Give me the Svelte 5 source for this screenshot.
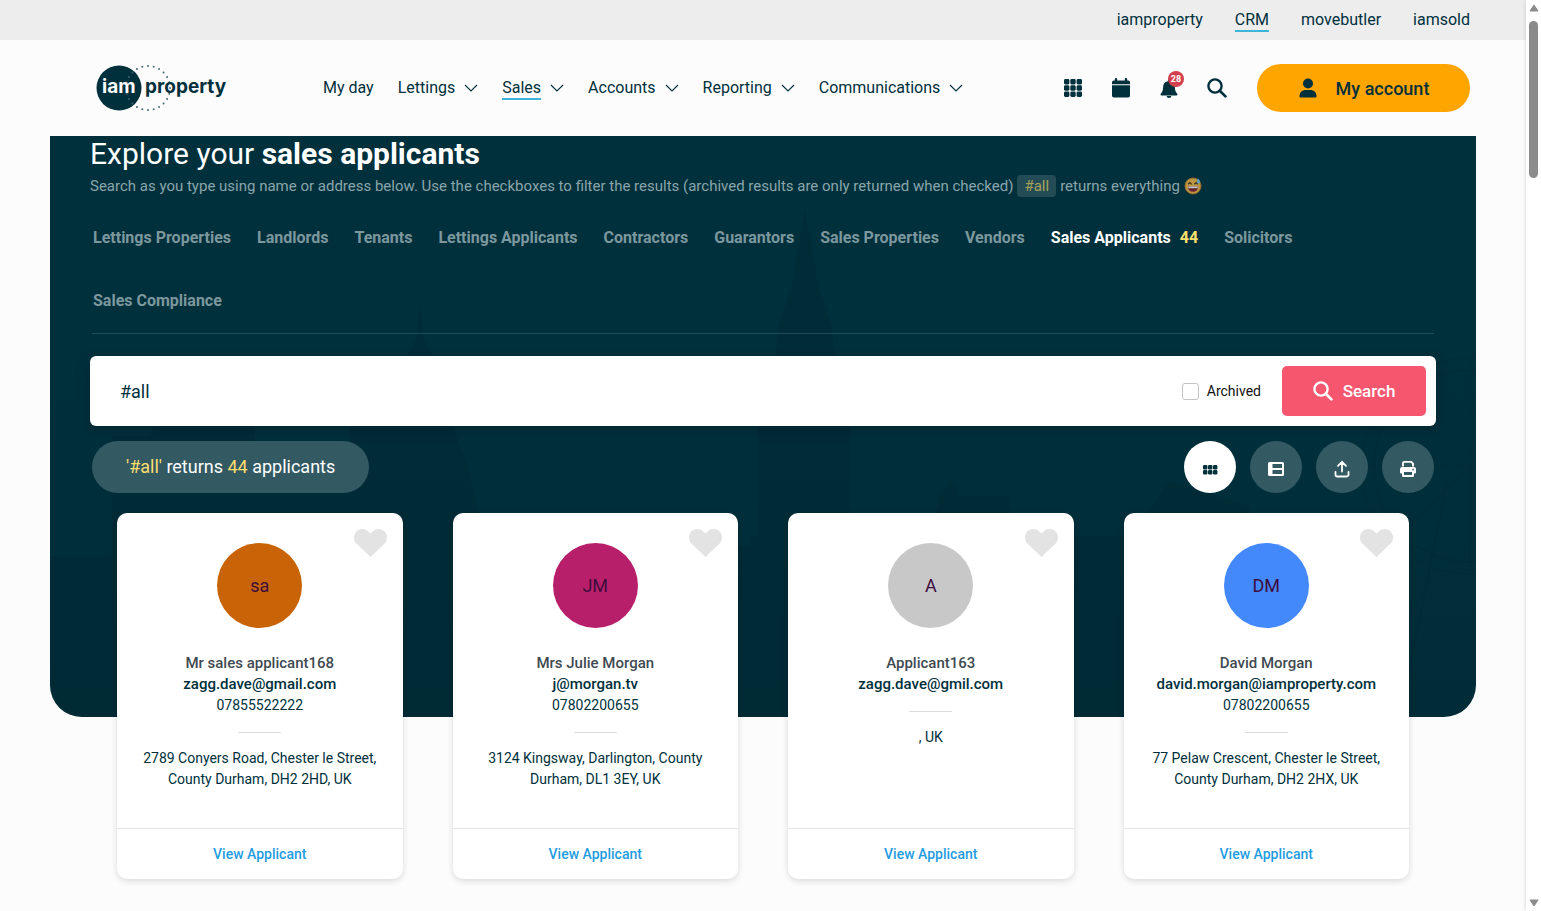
<script lang="ts">
  type Applicant = {
    initials: string;
    colour: string;
    name: string;
    email: string;
    phone?: string;
    address: string;
  };

  const sites = ['iamproperty', 'CRM', 'movebutler', 'iamsold'];

  const menu = [
    { label: 'My day', children: false },
    { label: 'Lettings', children: true },
    { label: 'Sales', children: true },
    { label: 'Accounts', children: true },
    { label: 'Reporting', children: true },
    { label: 'Communications', children: true },
  ];

  const tabs = [
    'Lettings Properties',
    'Landlords',
    'Tenants',
    'Lettings Applicants',
    'Contractors',
    'Guarantors',
    'Sales Properties',
    'Vendors',
    'Sales Applicants',
    'Solicitors',
    'Sales Compliance',
  ];

  const applicants: Applicant[] = [
    {
      initials: 'sa',
      colour: '#c86407',
      name: 'Mr sales applicant168',
      email: 'zagg.dave@gmail.com',
      phone: '07855522222',
      address: '2789 Conyers Road, Chester le Street, County Durham, DH2 2HD, UK',
    },
    {
      initials: 'JM',
      colour: '#b81f6b',
      name: 'Mrs Julie Morgan',
      email: 'j@morgan.tv',
      phone: '07802200655',
      address: '3124 Kingsway, Darlington, County Durham, DL1 3EY, UK',
    },
    {
      initials: 'A',
      colour: '#c8c8c8',
      name: 'Applicant163',
      email: 'zagg.dave@gmil.com',
      address: ', UK',
    },
    {
      initials: 'DM',
      colour: '#4489fb',
      name: 'David Morgan',
      email: 'david.morgan@iamproperty.com',
      phone: '07802200655',
      address: '77 Pelaw Crescent, Chester le Street, County Durham, DH2 2HX, UK',
    },
  ];

  let activeTab = $state('Sales Applicants');
  let query = $state('#all');
  let archived = $state(false);
  let total = $state(44);

  // The dotted ring behind the wordmark.
  const ring = Array.from({ length: 24 }, (_, i) => {
    const a = (i / 24) * Math.PI * 2;
    return { x: 52 + Math.sin(a) * 22, y: 24 - Math.cos(a) * 22 };
  });
</script>

{#snippet magnifier()}
  <svg viewBox="0 0 20 20" width="20" height="20" aria-hidden="true">
    <circle cx="8" cy="8" r="6.6" fill="none" stroke="currentColor" stroke-width="2.4" />
    <path d="M12.8 12.8 18.4 18.4" stroke="currentColor" stroke-width="2.7" stroke-linecap="round" />
  </svg>
{/snippet}

<div class="shell">
  <div class="page">
    <nav class="sites" aria-label="Sites">
      {#each sites as site}
        <a href="#{site}" class:current={site === 'CRM'}>{site}</a>
      {/each}
    </nav>

    <header class="bar">
      <a class="logo" href="#home" aria-label="iamproperty">
        <svg viewBox="0 0 132 48" width="132" height="48">
          <circle cx="23" cy="24" r="22.5" fill="#00303c" />
          {#each ring as dot}
            <circle cx={dot.x} cy={dot.y} r="1" fill={dot.x < 45 ? '#3f626b' : '#4b6a72'} />
          {/each}
          <text class="mark" x="6" y="29" fill="#fff">iam</text>
          <text class="mark" x="49" y="29" fill="#00303c">property</text>
        </svg>
      </a>

      <nav class="menu" aria-label="Main">
        {#each menu as item}
          <a href="#{item.label}">
            <span class:current={item.label === 'Sales'}>{item.label}</span>
            {#if item.children}
              <svg viewBox="0 0 14 8" width="14" height="8" aria-hidden="true">
                <path d="M1 1 7 7 13 1" fill="none" stroke="currentColor" stroke-width="1.1" />
              </svg>
            {/if}
          </a>
        {/each}
      </nav>

      <div class="tools">
        <button class="tool" aria-label="Apps">
          <svg viewBox="0 0 24 24" width="24" height="24">
            {#each [3, 9.3, 15.6] as y}
              {#each [3, 9.3, 15.6] as x}
                <rect {x} {y} width="5.400" height="5.400" rx="1.400" />
              {/each}
            {/each}
          </svg>
        </button>
        <button class="tool" aria-label="Calendar">
          <svg viewBox="0 0 24 24" width="24" height="24">
            <path d="M7 2a1.2 1.2 0 0 1 1.2 1.2V4.400h7.600V3.200a1.200 1.200 0 0 1 2.400 0V4.400H19.200A1.800 1.800 0 0 1 21 6.200V8.200H3V6.200A1.800 1.800 0 0 1 4.800 4.400h1V3.200A1.200 1.200 0 0 1 7 2ZM3 9.300h18V19.700A1.800 1.800 0 0 1 19.200 21.500H4.800A1.800 1.800 0 0 1 3 19.700Z" />
          </svg>
        </button>
        <button class="tool" aria-label="Notifications">
          <svg viewBox="0 0 24 24" width="24" height="24">
            <path d="M12 3.500a1.200 1.200 0 0 0-1.200 1.200v.6A6 6 0 0 0 6.100 11.200c0 3-.8 4.700-2.100 6.200-.9 1-.5 2 .6 2h14.800c1.100 0 1.500-1 .6-2-1.300-1.500-2.100-3.200-2.100-6.200a6 6 0 0 0-4.700-5.900v-.6A1.200 1.200 0 0 0 12 3.500ZM9.600 20a2.400 2 0 0 0 4.800 0Z" />
          </svg>
          <span class="badge">28</span>
        </button>
        <button class="tool" aria-label="Search">{@render magnifier()}</button>
        <button class="account">
          <svg viewBox="0 0 20 20" width="20" height="20" aria-hidden="true">
            <circle cx="10" cy="5.500" r="5" />
            <path d="M1.500 18.500C1.500 14 4.500 12 7.500 12h5c3 0 6 2 6 6.500 0 .6-.4 1-1 1h-15c-.6 0-1-.4-1-1Z" />
          </svg>
          My account
        </button>
      </div>
    </header>

    <main class="hero">
      <svg class="skyline" viewBox="0 0 1426 581" preserveAspectRatio="xMidYMax slice" aria-hidden="true">
        <path d="M0 581V420H62V300H100L104 288H205V340H300V290H340L352 260 358 220 367 200 370 168 373 200 382 220 388 260 402 290 418 330 436 410H700V400H708V290H720L728 190 742 150 755 72 768 150 782 190 790 290H800V400H880L890 360 900 344 910 360H960V400H1080L1120 345 1200 370V581Z" />
        <g fill="none" stroke="#002630" stroke-width="1">
          <circle cx="1420" cy="330" r="108" />
          <circle cx="1420" cy="330" r="96" />
          <path d="M1420 222V438M1312 330H1426M1344 254 1426 336M1344 406 1426 324M1400 330 1350 581" />
        </g>
      </svg>

      <h1>Explore your <strong>sales applicants</strong></h1>
      <p class="hint">
        <span>Search as you type using name or address below. Use the checkboxes to filter the results (archived results are only returned when checked)</span>
        <code>#all</code>
        <span>returns everything</span>
        <svg viewBox="0 0 18 18" width="18" height="18" aria-hidden="true">
          <circle cx="9" cy="9" r="8" fill="#f7b940" stroke="#c57a26" />
          <path d="M3.800 9.500h10.400c-.2 3.500-2.300 5.200-5.200 5.200S4 13 3.800 9.500Z" fill="#8c1f2c" />
          <path d="M4.300 9.500h9.400v1.700H4.300Z" fill="#fff" />
          <path d="M4 7.300 6 5.600 7.600 7.300M10.400 7.300 12 5.600 14 7.300" fill="none" stroke="#4c2f1a" stroke-width="1.200" />
          <path d="M14 1.500c1.500 1.700 2 2.500 2 3.400a1.600 1.600 0 0 1-3.200 0c0-.9.3-1.700 1.200-3.400Z" fill="#7fc2e8" />
        </svg>
      </p>

      <nav class="tabs" aria-label="Record type">
        {#each tabs as tab}
          <a href="#{tab}" class:active={tab === activeTab} onclick={() => (activeTab = tab)}>
            {tab}
            {#if tab === activeTab}<em>{total}</em>{/if}
          </a>
        {/each}
      </nav>

      <form class="search" onsubmit={(e) => e.preventDefault()}>
        <input class="query" type="text" aria-label="Search applicants" bind:value={query} />
        <label class="archived">
          <input type="checkbox" bind:checked={archived} />
          Archived
        </label>
        <button class="go" type="submit">{@render magnifier()}Search</button>
      </form>

      <div class="summary">
        <p class="pill"><em>'{query}'</em> returns <em>{total}</em> applicants</p>
        <div class="views">
          <button class="round on" aria-label="Grid view">
            <svg viewBox="0 0 18 18" width="18" height="18">
              {#each [5, 10] as y}
                {#each [2, 7, 12] as x}
                  <rect {x} {y} width="4.400" height="4.400" rx="1.200" />
                {/each}
              {/each}
            </svg>
          </button>
          <button class="round" aria-label="List view">
            <svg viewBox="0 0 18 18" width="18" height="18">
              <path fill-rule="evenodd" d="M2.500 2h13A1.500 1.500 0 0 1 17 3.500v11A1.500 1.500 0 0 1 15.500 16h-13A1.500 1.500 0 0 1 1 14.500v-11A1.500 1.500 0 0 1 2.500 2ZM5.500 4v4H15V4ZM5.500 10v4H15V10Z" />
            </svg>
          </button>
          <button class="round" aria-label="Export">
            <svg viewBox="0 0 18 18" width="18" height="18">
              <path d="M9 11.500V2M5 5.800 9 1.800l4 4M2.500 12v2.700A1.800 1.800 0 0 0 4.300 16.500h9.400a1.800 1.800 0 0 0 1.800-1.800V12" fill="none" stroke="currentColor" stroke-width="1.800" stroke-linecap="round" stroke-linejoin="round" />
            </svg>
          </button>
          <button class="round" aria-label="Print">
            <svg viewBox="0 0 18 18" width="18" height="18">
              <path d="M4 6.500V3.100A1.200 1.200 0 0 1 5.200 1.900h7L14 3.700V6.500" fill="none" stroke="currentColor" stroke-width="1.900" />
              <path fill-rule="evenodd" d="M3 7h12a2 2 0 0 1 2 2V12.500a1 1 0 0 1-1 1h-1v2.300a1.200 1.200 0 0 1-1.200 1.200H4.200A1.200 1.200 0 0 1 3 15.800V13.500H2a1 1 0 0 1-1-1V9a2 2 0 0 1 2-2ZM5 12v3h8v-3ZM14 8.800a.8.8 0 1 0 .1 0Z" />
            </svg>
          </button>
        </div>
      </div>

      <div class="cards">
        {#each applicants as person}
          <article class="card">
            <button class="heart" aria-label="Favourite {person.name}">
              <svg viewBox="0 0 33 28" width="33" height="28">
                <path d="M16.500 28 2.600 14.800C-.6 11.600-.9 6.200 2 2.900 5.200-.7 10.500-.8 14 2.300l2.500 2.300L19 2.300c3.500-3.100 8.800-3 12 .6 2.900 3.300 2.600 8.700-.6 11.900Z" fill="#e3e3e3" />
              </svg>
            </button>
            <div class="body">
              <div class="avatar" style:background-color={person.colour}>{person.initials}</div>
              <div class="name">{person.name}</div>
              <div class="email">{person.email}</div>
              {#if person.phone}<div>{person.phone}</div>{/if}
              <hr />
              <address>{person.address}</address>
            </div>
            <a class="view" href="#applicant">View Applicant</a>
          </article>
        {/each}
      </div>
    </main>
  </div>

  <div class="track" aria-hidden="true">
    <svg viewBox="0 0 10 8" width="10" height="8"><path d="M5 1 9 7H1Z" fill="#8b8b8b" stroke="#8b8b8b" stroke-linejoin="round" /></svg>
    <div class="thumb"></div>
    <svg viewBox="0 0 10 8" width="10" height="8"><path d="M5 7 9 1H1Z" fill="#8b8b8b" stroke="#8b8b8b" stroke-linejoin="round" /></svg>
  </div>
</div>

<style>
  :global(body) {
    background: #fcfcfc;
  }
  .shell {
    display: grid;
    grid-template-columns: 1fr 15px;
    min-height: 100vh;
    font-family: Roboto, 'Liberation Sans', sans-serif;
    font-size: 16px;
    color: #00303c;
  }
  .shell :where(*) {
    box-sizing: border-box;
  }
  a {
    color: inherit;
    text-decoration: none;
  }
  button,
  input {
    font: inherit;
    color: inherit;
  }
  button {
    border: 0;
    padding: 0;
    background: none;
    cursor: pointer;
  }
  svg {
    display: block;
    flex: none;
    fill: currentColor;
  }
  em {
    font-style: normal;
    color: #fddf6d;
  }
  .sites {
    display: flex;
    justify-content: flex-end;
    align-items: center;
    gap: 32px;
    height: 40px;
    padding: 0 56px;
    background: #ededed;
    line-height: 20px;
  }
  .current {
    border-bottom: 2px solid #3db4d8;
    margin-bottom: -2px;
  }
  .bar {
    display: flex;
    align-items: center;
    height: 96px;
    padding: 0 56px 0 96px;
  }
  .mark {
    font-family: Inter, sans-serif;
    font-size: 19px;
    font-weight: 700;
  }
  .menu {
    display: flex;
    gap: 24px;
    margin-left: 95px;
    line-height: 20px;
  }
  .menu a {
    display: flex;
    align-items: center;
    gap: 9px;
  }
  .tools {
    display: flex;
    align-items: center;
    gap: 24px;
    margin-left: auto;
  }
  .tool {
    position: relative;
    display: grid;
    place-items: center;
    width: 24px;
    height: 24px;
  }
  .badge {
    position: absolute;
    top: -5px;
    right: -3px;
    width: 16px;
    border-radius: 8px;
    background: #d23f4d;
    color: #fff;
    font-size: 9px;
    font-weight: 700;
    line-height: 16px;
    text-align: center;
  }
  .account {
    display: flex;
    align-items: center;
    justify-content: center;
    gap: 18px;
    width: 213px;
    height: 48px;
    margin-left: 4px;
    border-radius: 24px;
    background: #ffa500;
    font-size: 18px;
    font-weight: 500;
  }
  .hero {
    position: relative;
    display: flow-root;
    margin: 0 50px 194px;
    padding: 0 40px;
    border-radius: 0 0 32px 32px;
    background: linear-gradient(#00303c 40%, #002c37);
    color: #fff;
  }
  .hero > * {
    position: relative;
  }
  .hero > .skyline {
    position: absolute;
    inset: 0;
    width: 100%;
    height: 100%;
    border-radius: inherit;
    fill: #002630;
    opacity: 0.3;
  }
  h1 {
    margin: 0;
    font-size: 30px;
    font-weight: 400;
    line-height: 36px;
  }
  .hint {
    display: flex;
    align-items: center;
    gap: 4px;
    margin: 2px 0 8px;
    font-size: 15px;
    line-height: 24px;
    color: #8aa5ab;
  }
  .hint svg {
    opacity: 0.75;
  }
  code {
    padding: 0 7px;
    border-radius: 4px;
    background: #244c56;
    color: #a9a35a;
    font-family: inherit;
    line-height: 22px;
  }
  .tabs {
    display: flex;
    flex-wrap: wrap;
    column-gap: 26px;
    margin: 0 2px;
    padding: 0 1px 1px;
    border-bottom: 1px solid #1f4e58;
    font-size: 16px;
    font-weight: 700;
    line-height: 63px;
    color: #7c989e;
  }
  .tabs em {
    margin-left: 5px;
  }
  .active {
    color: #fff;
  }
  .search {
    display: flex;
    align-items: center;
    margin: 22px 0 15px;
    padding: 10px;
    border-radius: 6px;
    background: #fff;
    box-shadow: 0 4px 14px rgb(0 0 0 / 0.2);
    color: #00303c;
  }
  .query {
    flex: 1;
    min-width: 0;
    padding: 0 20px;
    border: 0;
    outline: 0;
    font-size: 18px;
  }
  .archived {
    display: flex;
    align-items: center;
    gap: 8px;
    font-size: 14px;
    color: #111;
  }
  .archived input {
    appearance: none;
    width: 17px;
    height: 17px;
    margin: 0;
    border: 1px solid #c4c4c4;
    border-radius: 3px;
    background: #fff;
  }
  .archived input:checked {
    background: #00303c;
  }
  .go {
    display: flex;
    align-items: center;
    justify-content: center;
    gap: 10px;
    width: 144px;
    height: 50px;
    margin-left: 21px;
    border-radius: 5px;
    background: #f7566f;
    color: #fff;
    font-size: 17px;
    font-weight: 500;
  }
  .summary {
    display: flex;
    justify-content: space-between;
    margin: 0 2px 20px;
  }
  .pill {
    margin: 0;
    padding: 0 34px;
    border-radius: 26px;
    background: #335963;
    font-size: 18px;
    line-height: 52px;
  }
  .views {
    display: flex;
    gap: 14px;
  }
  .round {
    display: grid;
    place-items: center;
    width: 52px;
    height: 52px;
    padding-top: 4px;
    border-radius: 50%;
    background: #335963;
    color: #fff;
  }
  .on {
    background: #fff;
    color: #00303c;
  }
  .cards {
    display: grid;
    grid-template-columns: repeat(4, 1fr);
    gap: 50px;
    margin: 0 27px -162px;
  }
  .card {
    position: relative;
    display: flex;
    flex-direction: column;
    border-radius: 10px;
    background: #fff;
    box-shadow: 0 2px 6px rgb(0 0 0 / 0.14);
    color: #00303c;
    font-size: 14px;
    line-height: 21px;
    text-align: center;
  }
  .heart {
    position: absolute;
    top: 16px;
    right: 16px;
  }
  .body {
    flex: 1;
    padding: 30px 24px 38px;
  }
  .avatar {
    width: 85px;
    margin: 0 auto 25px;
    border-radius: 50%;
    color: #3d0c3c;
    font-size: 18px;
    line-height: 85px;
  }
  .name,
  .email {
    font-size: 15px;
    font-weight: 500;
  }
  .name {
    color: #3f4a52;
  }
  hr {
    width: 43px;
    margin: 16px auto 15px;
    border: 0;
    border-top: 1px solid #dcdcdc;
  }
  address {
    font-style: normal;
  }
  .view {
    border-top: 1px solid #e2e6e8;
    color: #1f9ce0;
    font-weight: 500;
    line-height: 50px;
  }
  .track {
    display: flex;
    flex-direction: column;
    align-items: center;
    gap: 9px;
    padding: 4px 0;
    background: #fff;
    box-shadow: 0 0 4px rgb(0 0 0 / 0.16);
  }
  .thumb {
    width: 9px;
    height: 157px;
    margin-bottom: auto;
    border-radius: 5px;
    background: #8b8b8b;
  }
</style>
